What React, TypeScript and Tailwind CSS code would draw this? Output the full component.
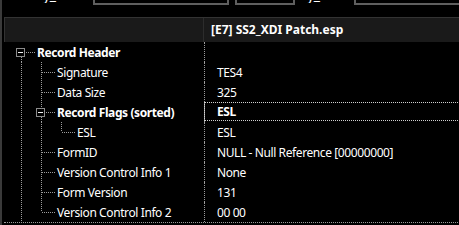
import type { ReactNode } from "react";

type Seg = [number, number, number, number];

type Row = {
  label: string;
  value: string;
  textX: number;
  bold?: boolean;
  focused?: boolean;
  lines: Seg[];
  box?: number;
};

// grid starts 4px from the window edge; tree coords below are window coords
const OFF = 4;

const rows: Row[] = [
  { label: "Record Header", value: "", textX: 37, bold: true, box: 16, lines: [[26, 10, 35, 10], [21, 15, 21, 20]] },
  { label: "Signature", value: "TES4", textX: 57, lines: [[21, 0, 21, 20], [41, 0, 41, 20], [42, 10, 55, 10]] },
  { label: "Data Size", value: "325", textX: 57, lines: [[21, 0, 21, 20], [41, 0, 41, 20], [42, 10, 55, 10]] },
  { label: "Record Flags (sorted)", value: "ESL", textX: 57, bold: true, focused: true, box: 36, lines: [[21, 0, 21, 20], [41, 0, 41, 6], [41, 15, 41, 20], [46, 10, 55, 10], [61, 15, 61, 20]] },
  { label: "ESL", value: "ESL", textX: 77, lines: [[21, 0, 21, 20], [41, 0, 41, 20], [61, 0, 61, 10], [62, 10, 75, 10]] },
  { label: "FormID", value: "NULL - Null Reference [00000000]", textX: 57, lines: [[21, 0, 21, 20], [41, 0, 41, 20], [42, 10, 55, 10]] },
  { label: "Version Control Info 1", value: "None", textX: 57, lines: [[21, 0, 21, 20], [41, 0, 41, 20], [42, 10, 55, 10]] },
  { label: "Form Version", value: "131", textX: 57, lines: [[21, 0, 21, 20], [41, 0, 41, 20], [42, 10, 55, 10]] },
  { label: "Version Control Info 2", value: "00 00", textX: 57, lines: [[21, 0, 21, 20], [41, 0, 41, 10], [42, 10, 55, 10]] },
];

const Guides = ({ row }: { row: Row }) => (
  <svg width={row.textX - OFF} height={20} className="shrink-0">
    {row.lines.map(([x1, y1, x2, y2], i) => {
      const vert = x1 === x2;
      return (
        <line
          key={i}
          x1={x1 - OFF + (vert ? 0.5 : 0)}
          y1={y1 + (vert ? 0 : 0.5)}
          x2={x2 - OFF + (vert ? 0.5 : 0)}
          y2={y2 + (vert ? 0 : 0.5)}
          stroke="#9c9c9c"
          strokeWidth={1}
          strokeDasharray="1 1"
        />
      );
    })}
    {row.box !== undefined && (
      <g>
        <rect x={row.box - OFF + 0.5} y={6.5} width={8} height={8} fill="#000" stroke="#8c8c8c" />
        <line x1={row.box - OFF + 2} y1={10.5} x2={row.box - OFF + 7} y2={10.5} stroke="#f0f0f0" />
      </g>
    )}
  </svg>
);

const CutBox = ({ className }: { className: string }) => (
  <div className={`h-[5px] border-x-2 border-b-2 border-[#5f5f5f] ${className}`} />
);

const CutText = ({ children, className }: { children: ReactNode; className: string }) => (
  <div className={`h-[3px] overflow-hidden ${className}`}>
    <div className="-mt-[13px] text-[14px] leading-[16px] text-white">{children}</div>
  </div>
);

export default function App() {
  return (
    <div
      className="w-[459px] h-[225px] bg-black overflow-hidden flex text-white text-[12px] tracking-[-0.4px]"
      style={{ fontFamily: '"Noto Sans", "Open Sans", sans-serif' }}
    >
      <div className="w-[2px] bg-[#3a3a3a] shrink-0" />
      <div className="flex-1 flex flex-col">
        {/* partially hidden toolbar above */}
        <div className="h-[17px] flex items-start shrink-0">
          <CutText className="ml-[41px] w-[20px]">y_</CutText>
          <CutBox className="ml-[30px] w-[136px]" />
          <CutBox className="ml-[6px] w-[60px]" />
          <CutText className="ml-[12px] w-[20px]">y_</CutText>
          <CutBox className="ml-[27px] w-[120px] border-r-0" />
        </div>

        {/* grid */}
        <div className="ml-[2px] flex-1 flex flex-col">
          <div className="h-[25px] flex bg-[#1a1a1a] border-t border-l border-[#333333] shrink-0">
            <div className="w-[199px] border-r border-[#2c2c2c]" />
            <div className="pl-[7px] flex items-center font-bold text-[12px] tracking-normal">[E7] SS2_XDI Patch.esp</div>
          </div>
          <div className="flex flex-col">
            {rows.map((row, i) => (
              <div
                key={row.label}
                className={`flex ${i === rows.length - 1 ? "border-b border-dotted border-[#9c9c9c] h-[21px]" : "h-[20px]"}`}
              >
                <div className="w-[200px] shrink-0 flex items-start">
                  <Guides row={row} />
                  <span className={`pt-[2px] leading-[18px] whitespace-nowrap ${row.bold ? "font-bold" : ""}`}>{row.label}</span>
                </div>
                <div className="w-px shrink-0 border-l border-dotted border-[#9c9c9c]" />
                <div className="flex-1 min-w-0">
                  {row.focused ? (
                    <div className="h-[19px] -ml-px border-y border-l border-dotted border-[#d0d0d0] pl-[12px] pt-px leading-[16px] font-bold">
                      {row.value}
                    </div>
                  ) : (
                    <div className="pl-[12px] pt-[2px] leading-[18px] whitespace-nowrap">{row.value}</div>
                  )}
                </div>
              </div>
            ))}
          </div>
        </div>
      </div>
    </div>
  );
}
